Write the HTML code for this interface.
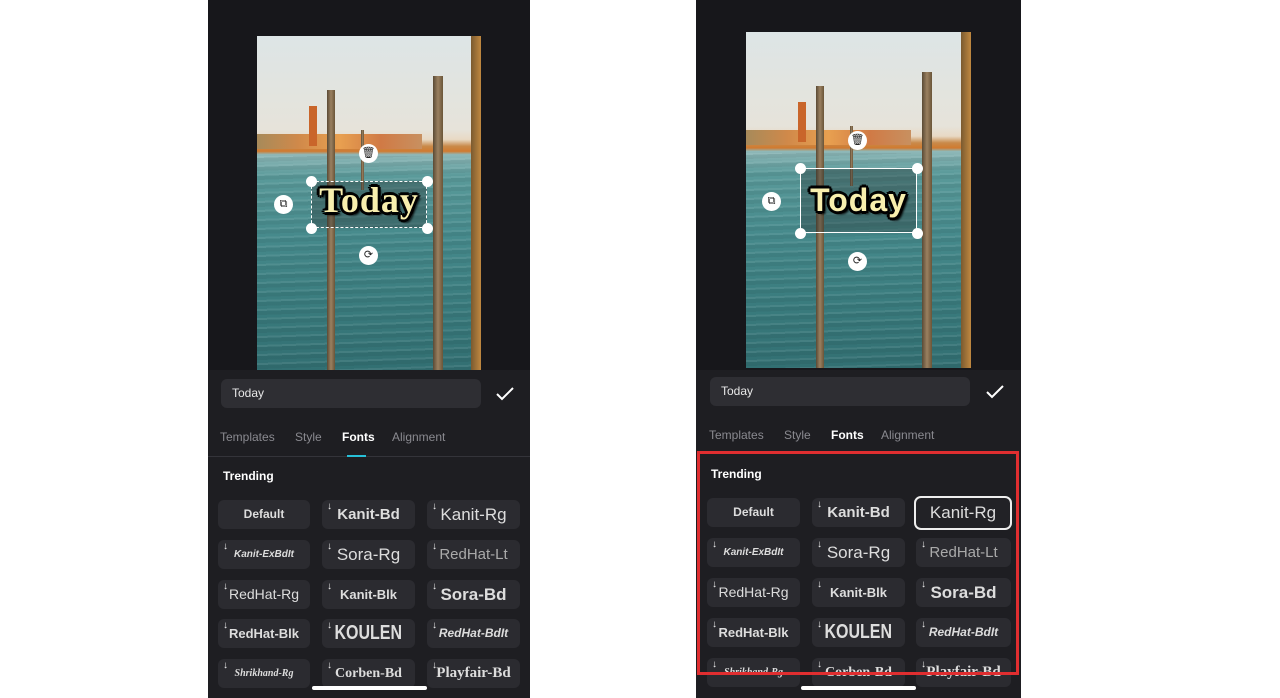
<!DOCTYPE html>
<html><head><meta charset="utf-8"><style>
*{margin:0;padding:0;box-sizing:border-box}
body{width:1280px;height:698px;background:#fff;position:relative;overflow:hidden;font-family:"Liberation Sans",sans-serif}
.ph{position:absolute;top:0;height:698px;background:#1e1e22;overflow:hidden}
.top{position:absolute;left:0;top:0;right:0;height:370px;background:#17171b}
.img{position:absolute;overflow:hidden;background:linear-gradient(180deg,#dde5e6 0%,#e6e3da 28%,#e8d9c4 31%,#c98a4a 33%,#d07a30 34.5%,#8fb8b8 35.5%,#5a9a9a 42%,#468a8c 60%,#3a7c7e 80%,#326f72 100%)}
.img::after{content:"";position:absolute;left:0;right:0;top:36%;bottom:0;background:repeating-linear-gradient(178deg,rgba(255,255,255,.08) 0 2px,rgba(0,0,0,.06) 2px 6px,transparent 6px 9px)}
.pole{position:absolute;background:linear-gradient(90deg,#5a4a35,#9a8060,#6a5538);z-index:1}
.city{position:absolute;background:#d08a4a}
.sel{position:absolute;border:1px solid #fff;background:rgba(40,50,50,.35);z-index:2}
.dot{position:absolute;width:11px;height:11px;border-radius:50%;background:#fff;z-index:3}
.btn{position:absolute;width:19px;height:19px;border-radius:50%;background:#fff;color:#222;font-size:11px;line-height:19px;text-align:center;z-index:3}
.tx{position:absolute;color:#f8efae;font-weight:bold;text-align:center;z-index:3;text-shadow:2px 2px 0 #000,-2px -2px 0 #000,2px -2px 0 #000,-2px 2px 0 #000,0 3px 0 #000,3px 0 0 #000,-3px 0 0 #000,0 -3px 0 #000,3px 3px 2px #000}
.inp{position:absolute;height:29px;border-radius:6px;background:#2e2e33;color:#e8e8e8;font-size:12px;line-height:29px;padding-left:11px}
.chk{position:absolute;width:18px;height:18px}
.tabs{position:absolute;font-size:12px;color:#8a8a90}
.tabs span{position:absolute;white-space:nowrap}
.tabs .on{color:#fff;font-weight:bold}
.ul{position:absolute;height:2px;background:#27c0d8;width:19px}
.div{position:absolute;left:0;right:0;height:1px;background:#34343a}
.tr{position:absolute;color:#fff;font-size:12px;font-weight:bold}
.t{position:absolute;height:29px;border-radius:6px;background:#2b2b30;color:#ddd;text-align:center;line-height:29px;white-space:nowrap;overflow:hidden}
.t sup{font-size:10px;position:absolute;left:5px;top:-8px;color:#eee;font-weight:bold;font-style:normal}
.home{position:absolute;top:686px;width:115px;height:4px;border-radius:2px;background:#fff}
</style></head><body>

<!-- LEFT PHONE -->
<div class="ph" style="left:208px;width:322px">
<div class="top"></div>
<div class="img" style="left:49px;top:36px;width:224px;height:334px">
 <div class="city" style="left:0;top:98px;width:165px;height:15px;background:linear-gradient(90deg,#a78a5a,#d0894a,#e8a050,#d07a45,#c89060)"></div>
 <div class="city" style="left:52px;top:70px;width:8px;height:40px;background:#c9652a"></div>
 <div class="pole" style="left:70px;top:54px;width:8px;height:280px"></div>
 <div class="pole" style="left:176px;top:40px;width:10px;height:294px"></div>
 <div class="pole" style="left:104px;top:94px;width:3px;height:60px"></div>
 <div class="pole" style="left:214px;top:0;width:10px;height:334px;background:linear-gradient(90deg,#7a5a30,#c08840)"></div>
</div>
<div class="sel" style="left:103px;top:181px;width:116px;height:47px;border-style:dashed"></div>
<div class="tx" style="left:93px;top:179px;width:136px;font-family:'Liberation Serif',serif;font-size:36px;letter-spacing:1px">Today</div>
<div class="dot" style="left:98px;top:176px"></div><div class="dot" style="left:214px;top:176px"></div>
<div class="dot" style="left:98px;top:223px"></div><div class="dot" style="left:214px;top:223px"></div>
<div class="btn" style="left:151px;top:144px">🗑</div>
<div class="btn" style="left:66px;top:195px">⧉</div>
<div class="btn" style="left:151px;top:246px">⟳</div>
<div class="inp" style="left:13px;top:379px;width:260px">Today</div>
<svg class="chk" style="left:288px;top:385px" viewBox="0 0 18 18"><path d="M1 9l5 5L17 3" stroke="#fff" stroke-width="2" fill="none"/></svg>
<div class="tabs" style="left:0;top:430px"><span style="left:12px">Templates</span><span style="left:87px">Style</span><span class="on" style="left:134px">Fonts</span><span style="left:184px">Alignment</span></div>
<div class="div" style="top:456px"></div>
<div class="ul" style="left:139px;top:455px"></div>
<div class="tr" style="left:15px;top:469px">Trending</div>
<div class="t" style="left:10px;top:500px;width:92px;font-size:12px;font-weight:bold">Default</div>
<div class="t" style="left:114px;top:500px;width:93px;font-size:15px;font-weight:bold"><sup>↓</sup>Kanit-Bd</div>
<div class="t" style="left:219px;top:500px;width:93px;font-size:17px"><sup>↓</sup>Kanit-Rg</div>
<div class="t" style="left:10px;top:540px;width:92px;font-size:10px;font-weight:bold;font-style:italic"><sup>↓</sup>Kanit-ExBdIt</div>
<div class="t" style="left:114px;top:540px;width:93px;font-size:17px"><sup>↓</sup>Sora-Rg</div>
<div class="t" style="left:219px;top:540px;width:93px;font-size:15px;color:#aaa"><sup>↓</sup>RedHat-Lt</div>
<div class="t" style="left:10px;top:580px;width:92px;font-size:14px"><sup>↓</sup>RedHat-Rg</div>
<div class="t" style="left:114px;top:580px;width:93px;font-size:13px;font-weight:bold"><sup>↓</sup>Kanit-Blk</div>
<div class="t" style="left:219px;top:580px;width:93px;font-size:17px;font-weight:bold"><sup>↓</sup>Sora-Bd</div>
<div class="t" style="left:10px;top:619px;width:92px;font-size:13px;font-weight:bold"><sup>↓</sup>RedHat-Blk</div>
<div class="t" style="left:114px;top:619px;width:93px;font-size:20px;font-weight:bold"><sup>↓</sup><span style="display:inline-block;transform:scaleX(.8)">KOULEN</span></div>
<div class="t" style="left:219px;top:619px;width:93px;font-size:12px;font-weight:bold;font-style:italic"><sup>↓</sup>RedHat-BdIt</div>
<div class="t" style="left:10px;top:659px;width:92px;font-size:10px;font-weight:bold;font-style:italic;font-family:'Liberation Serif',serif"><sup>↓</sup>Shrikhand-Rg</div>
<div class="t" style="left:114px;top:659px;width:93px;font-size:14px;font-weight:bold;font-family:'Liberation Serif',serif"><sup>↓</sup>Corben-Bd</div>
<div class="t" style="left:219px;top:659px;width:93px;font-size:15px;font-weight:bold;font-family:'Liberation Serif',serif"><sup>↓</sup>Playfair-Bd</div>
<div class="home" style="left:104px"></div>
</div>

<!-- RIGHT PHONE -->
<div class="ph" style="left:696px;width:325px">
<div class="top"></div>
<div class="img" style="left:50px;top:32px;width:225px;height:336px">
 <div class="city" style="left:0;top:98px;width:165px;height:15px;background:linear-gradient(90deg,#a78a5a,#d0894a,#e8a050,#d07a45,#c89060)"></div>
 <div class="city" style="left:52px;top:70px;width:8px;height:40px;background:#c9652a"></div>
 <div class="pole" style="left:70px;top:54px;width:8px;height:282px"></div>
 <div class="pole" style="left:176px;top:40px;width:10px;height:296px"></div>
 <div class="pole" style="left:104px;top:94px;width:3px;height:60px"></div>
 <div class="pole" style="left:215px;top:0;width:10px;height:336px;background:linear-gradient(90deg,#7a5a30,#c08840)"></div>
</div>
<div class="sel" style="left:104px;top:168px;width:117px;height:65px"></div>
<div class="tx" style="left:94px;top:182px;width:137px;font-size:32px;letter-spacing:1px">Today</div>
<div class="dot" style="left:99px;top:163px"></div><div class="dot" style="left:216px;top:163px"></div>
<div class="dot" style="left:99px;top:228px"></div><div class="dot" style="left:216px;top:228px"></div>
<div class="btn" style="left:152px;top:131px">🗑</div>
<div class="btn" style="left:66px;top:192px">⧉</div>
<div class="btn" style="left:152px;top:252px">⟳</div>
<div class="inp" style="left:14px;top:377px;width:260px">Today</div>
<svg class="chk" style="left:290px;top:383px" viewBox="0 0 18 18"><path d="M1 9l5 5L17 3" stroke="#fff" stroke-width="2" fill="none"/></svg>
<div class="tabs" style="left:0;top:428px"><span style="left:13px">Templates</span><span style="left:88px">Style</span><span class="on" style="left:135px">Fonts</span><span style="left:185px">Alignment</span></div>
<div class="tr" style="left:15px;top:467px">Trending</div>
<div class="t" style="left:11px;top:498px;width:93px;font-size:12px;font-weight:bold">Default</div>
<div class="t" style="left:116px;top:498px;width:93px;font-size:15px;font-weight:bold"><sup>↓</sup>Kanit-Bd</div>
<div class="t" style="left:218px;top:496px;width:98px;height:34px;line-height:30px;font-size:17px;border:2px solid #eee;background:#222226;border-radius:7px">Kanit-Rg</div>
<div class="t" style="left:11px;top:538px;width:93px;font-size:10px;font-weight:bold;font-style:italic"><sup>↓</sup>Kanit-ExBdIt</div>
<div class="t" style="left:116px;top:538px;width:93px;font-size:17px"><sup>↓</sup>Sora-Rg</div>
<div class="t" style="left:220px;top:538px;width:95px;font-size:15px;color:#aaa"><sup>↓</sup>RedHat-Lt</div>
<div class="t" style="left:11px;top:578px;width:93px;font-size:14px"><sup>↓</sup>RedHat-Rg</div>
<div class="t" style="left:116px;top:578px;width:93px;font-size:13px;font-weight:bold"><sup>↓</sup>Kanit-Blk</div>
<div class="t" style="left:220px;top:578px;width:95px;font-size:17px;font-weight:bold"><sup>↓</sup>Sora-Bd</div>
<div class="t" style="left:11px;top:618px;width:93px;font-size:13px;font-weight:bold"><sup>↓</sup>RedHat-Blk</div>
<div class="t" style="left:116px;top:618px;width:93px;font-size:20px;font-weight:bold"><sup>↓</sup><span style="display:inline-block;transform:scaleX(.8)">KOULEN</span></div>
<div class="t" style="left:220px;top:618px;width:95px;font-size:12px;font-weight:bold;font-style:italic"><sup>↓</sup>RedHat-BdIt</div>
<div class="t" style="left:11px;top:658px;width:93px;font-size:10px;font-weight:bold;font-style:italic;font-family:'Liberation Serif',serif"><sup>↓</sup>Shrikhand-Rg</div>
<div class="t" style="left:116px;top:658px;width:93px;font-size:14px;font-weight:bold;font-family:'Liberation Serif',serif"><sup>↓</sup>Corben-Bd</div>
<div class="t" style="left:220px;top:658px;width:95px;font-size:15px;font-weight:bold;font-family:'Liberation Serif',serif"><sup>↓</sup>Playfair-Bd</div>
<div style="position:absolute;left:1px;top:451px;width:322px;height:224px;border:3px solid #e02e30"></div>
<div class="home" style="left:105px"></div>
</div>
</body></html>
